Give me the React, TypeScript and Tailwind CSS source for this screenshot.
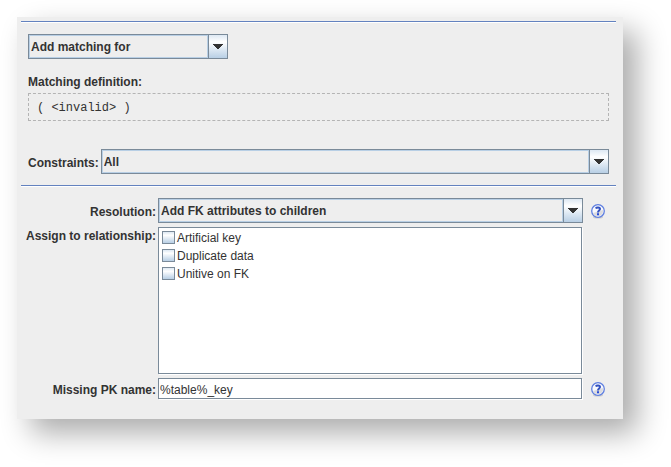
import React, { useState } from 'react';

const Separator: React.FC = () => (
  <hr className="h-[2px] border-0 border-t border-b border-t-[#6382bf] border-b-white" />
);

const ComboBox: React.FC<{ id: string; label?: string; options: string[]; className?: string }> = ({
  id,
  label,
  options,
  className = '',
}) => (
  <div className={`relative h-[25px] border border-[#7a8a99] bg-[#eee] ${className}`}>
    <select
      id={id}
      aria-label={label}
      className="block h-full w-full appearance-none border border-[#b8cfe5] border-r-[20px] bg-[#eee] pl-px text-xs font-bold leading-4 text-[#333] outline-none"
    >
      {options.map((option) => (
        <option key={option}>{option}</option>
      ))}
    </select>
    <span className="pointer-events-none absolute inset-y-0 right-0 flex w-[19px] items-center justify-center border-l border-[#7a8a99] bg-linear-to-b from-[#dde8f3] via-white via-30% to-[#b8cfe5]">
      <svg width="10" height="5" viewBox="0 0 10 5" fill="#333" shapeRendering="crispEdges" aria-hidden="true">
        <path d="M0 0h10v1H9v1H8v1H7v1H6v1H4V4H3V3H2V2H1V1H0z" />
      </svg>
    </span>
  </div>
);

const HelpButton: React.FC<{ topic: string }> = ({ topic }) => (
  <button type="button" aria-label={`Help on ${topic}`} className="mx-2 mr-1 block self-center pt-px">
    <svg width="14" height="15" viewBox="0 0 14 15" fill="none" aria-hidden="true">
      <ellipse cx="7" cy="13" rx="5" ry="1.5" fill="#ccc" />
      <circle cx="7" cy="7" r="6.3" fill="#f8f9fd" stroke="#5f7fe0" strokeWidth="1.3" />
      <path d="M2 9l10-3c.6 3-1.5 6.2-5 6.2S2.6 11 2 9z" fill="#dcdcdf" />
      <path d="M4.800 4.500C5.500 3.200 9 3.100 9 5.100 9 6.500 7 6.500 7 8.400" stroke="#3352c0" strokeWidth="2" />
      <path d="M6 9.300h2v1.900H6z" fill="#2448d8" />
    </svg>
  </button>
);

const CheckItem: React.FC<{ label: string }> = ({ label }) => (
  <label className="flex h-[18px] items-center gap-0.5">
    <input
      type="checkbox"
      className="mb-px h-[13px] w-[13px] appearance-none border border-[#7a8a99] bg-linear-to-b from-[#dde8f3] via-white via-30% to-[#b8cfe5] checked:to-[#6382bf]"
    />
    {label}
  </label>
);

const relationships = ['Artificial key', 'Duplicate data', 'Unitive on FK'];

const App: React.FC = () => {
  const [keyName, setKeyName] = useState('%table%_key');

  return (
    <div className="min-h-screen bg-white pt-[17px] pr-12 pb-12 pl-[17px] font-['Liberation_Sans',Arial,sans-serif] text-xs leading-4 text-[#333]">
      <form className="bg-[#eee] pt-1 pr-[7px] pb-5 pl-1 shadow-[14px_14px_28px_rgba(0,0,0,0.33)]">
        <Separator />
        <section className="px-[7px] pt-[11px] pb-[11px]">
          <ComboBox id="mode" label="Matching mode" options={['Add matching for']} className="w-[200px]" />
          <h2 className="mt-[15px] font-bold">Matching definition:</h2>
          <div className="mt-[3px] h-7 border border-dashed border-[#b4b4b4] px-2 pt-1.5 font-['Liberation_Mono','Courier_New',monospace]">
            ( &lt;invalid&gt; )
          </div>
          <div className="mt-7 flex items-center gap-0.5">
            <label htmlFor="constraints" className="pt-0.5 font-bold">Constraints:</label>
            <ComboBox id="constraints" options={['All']} className="flex-1" />
          </div>
        </section>
        <Separator />
        <section className="grid grid-cols-[auto_1fr_auto] gap-y-1 pt-[11px] pr-[7px] pl-[5px]">
          <label htmlFor="resolution" className="mr-0.5 self-center pt-0.5 text-right font-bold">Resolution:</label>
          <ComboBox id="resolution" options={['Add FK attributes to children']} />
          <HelpButton topic="resolution" />

          <span id="assign" className="mr-0.5 pt-px text-right font-bold">Assign to relationship:</span>
          <div
            role="group"
            aria-labelledby="assign"
            className="mr-px min-h-[147px] border border-[#7a8a99] bg-white px-[3px] py-px shadow-[1px_1px_0_#fff]"
          >
            {relationships.map((name) => (
              <CheckItem key={name} label={name} />
            ))}
          </div>
          <span />

          <label htmlFor="pk" className="mr-0.5 self-center pt-0.5 text-right font-bold">Missing PK name:</label>
          <input
            id="pk"
            type="text"
            value={keyName}
            onChange={(e) => setKeyName(e.target.value)}
            className="mr-px h-[21px] min-w-0 border border-[#7a8a99] bg-white px-px pt-0.5 shadow-[1px_1px_0_#fff] outline-none"
          />
          <HelpButton topic="missing PK name" />
        </section>
      </form>
    </div>
  );
};

export default App;
